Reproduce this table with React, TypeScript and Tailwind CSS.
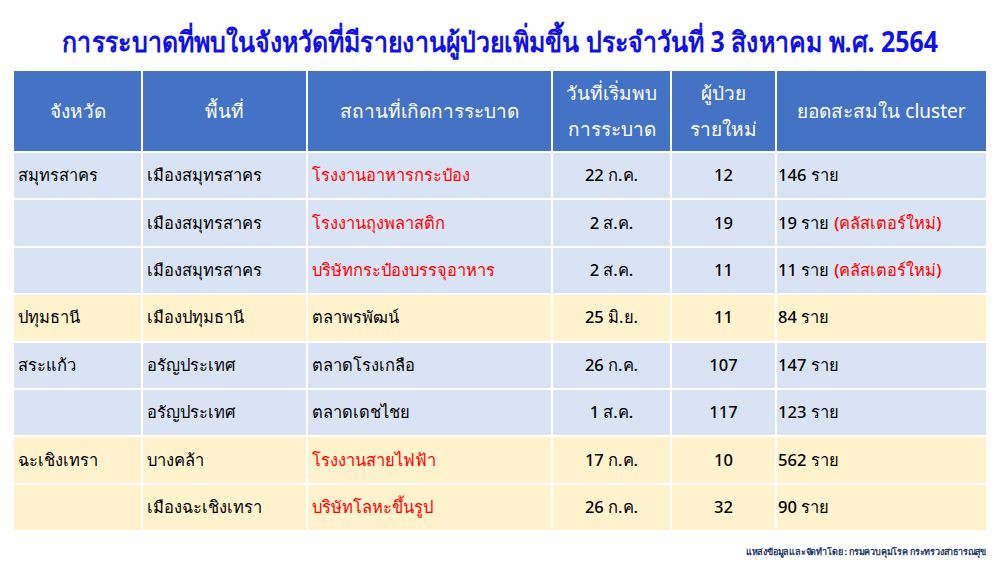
const ROWS: {
  province: string;
  area: string;
  place: string;
  placeRed?: boolean;
  date: string;
  newCases: string;
  total: string;
  isNew?: boolean;
  tone: "blue" | "yellow";
}[] = [
  { province: "สมุทรสาคร", area: "เมืองสมุทรสาคร", place: "โรงงานอาหารกระป๋อง", placeRed: true, date: "22 ก.ค.", newCases: "12", total: "146 ราย", tone: "blue" },
  { province: "", area: "เมืองสมุทรสาคร", place: "โรงงานถุงพลาสติก", placeRed: true, date: "2 ส.ค.", newCases: "19", total: "19 ราย", isNew: true, tone: "blue" },
  { province: "", area: "เมืองสมุทรสาคร", place: "บริษัทกระป๋องบรรจุอาหาร", placeRed: true, date: "2 ส.ค.", newCases: "11", total: "11 ราย", isNew: true, tone: "blue" },
  { province: "ปทุมธานี", area: "เมืองปทุมธานี", place: "ตลาพรพัฒน์", date: "25 มิ.ย.", newCases: "11", total: "84 ราย", tone: "yellow" },
  { province: "สระแก้ว", area: "อรัญประเทศ", place: "ตลาดโรงเกลือ", date: "26 ก.ค.", newCases: "107", total: "147 ราย", tone: "blue" },
  { province: "", area: "อรัญประเทศ", place: "ตลาดเดชไชย", date: "1 ส.ค.", newCases: "117", total: "123 ราย", tone: "blue" },
  { province: "ฉะเชิงเทรา", area: "บางคล้า", place: "โรงงานสายไฟฟ้า", placeRed: true, date: "17 ก.ค.", newCases: "10", total: "562 ราย", tone: "yellow" },
  { province: "", area: "เมืองฉะเชิงเทรา", place: "บริษัทโลหะขึ้นรูป", placeRed: true, date: "26 ก.ค.", newCases: "32", total: "90 ราย", tone: "yellow" },
];

function HeadCell({ children }: { children: React.ReactNode }) {
  return (
    <div className="bg-[#4472c4] text-white flex flex-col items-center justify-center text-[19px] leading-[36px] text-center">
      {children}
    </div>
  );
}

export default function App() {
  return (
    <div className="w-[1000px] h-[563px] bg-white font-['Noto_Sans','DejaVu_Sans',sans-serif] relative overflow-hidden">
      <div className="h-[71px] pt-[27px] flex justify-center">
        <h1 className="text-[#1010e8] font-bold text-[28px] leading-none whitespace-nowrap scale-x-[0.89]">
          การระบาดที่พบในจังหวัดที่มีรายงานผู้ป่วยเพิ่มขึ้น ประจำวันที่ 3 สิงหาคม พ.ศ. 2564
        </h1>
      </div>

      <div className="mx-[14px] grid grid-cols-[127px_163px_243px_117px_103px_209px] gap-[2px] auto-rows-[45.4px] grid-rows-[80px]">
        <HeadCell>จังหวัด</HeadCell>
        <HeadCell>พื้นที่</HeadCell>
        <HeadCell>สถานที่เกิดการระบาด</HeadCell>
        <HeadCell>
          <span>วันที่เริ่มพบ</span>
          <span>การระบาด</span>
        </HeadCell>
        <HeadCell>
          <span>ผู้ป่วย</span>
          <span>รายใหม่</span>
        </HeadCell>
        <HeadCell>ยอดสะสมใน cluster</HeadCell>

        {ROWS.map((r, i) => {
          const bg = r.tone === "blue" ? "bg-[#dae3f3]" : "bg-[#fff2cc]";
          const cell = `${bg} flex items-center text-[16.5px] font-medium`;
          return [
            <div key={`${i}a`} className={`${cell} pl-[4px] text-black`}>{r.province}</div>,
            <div key={`${i}b`} className={`${cell} pl-[4px] text-black`}>{r.area}</div>,
            <div key={`${i}c`} className={`${cell} pl-[4px] ${r.placeRed ? "text-[#ff0000]" : "text-black"}`}>{r.place}</div>,
            <div key={`${i}d`} className={`${cell} justify-center text-black`}>{r.date}</div>,
            <div key={`${i}e`} className={`${cell} justify-center text-black`}>{r.newCases}</div>,
            <div key={`${i}f`} className={`${cell} pl-[1px] text-black`}>
              {r.total}
              {r.isNew && <span className="text-[#ff0000] ml-[5px]">(คลัสเตอร์ใหม่)</span>}
            </div>,
          ];
        })}
      </div>

      <p className="absolute right-[14px] bottom-[5px] text-[9px] font-bold text-[#1f3864] tracking-[-0.2px]">
        แหล่งข้อมูลและจัดทำโดย : กรมควบคุมโรค กระทรวงสาธารณสุข
      </p>
    </div>
  );
}
